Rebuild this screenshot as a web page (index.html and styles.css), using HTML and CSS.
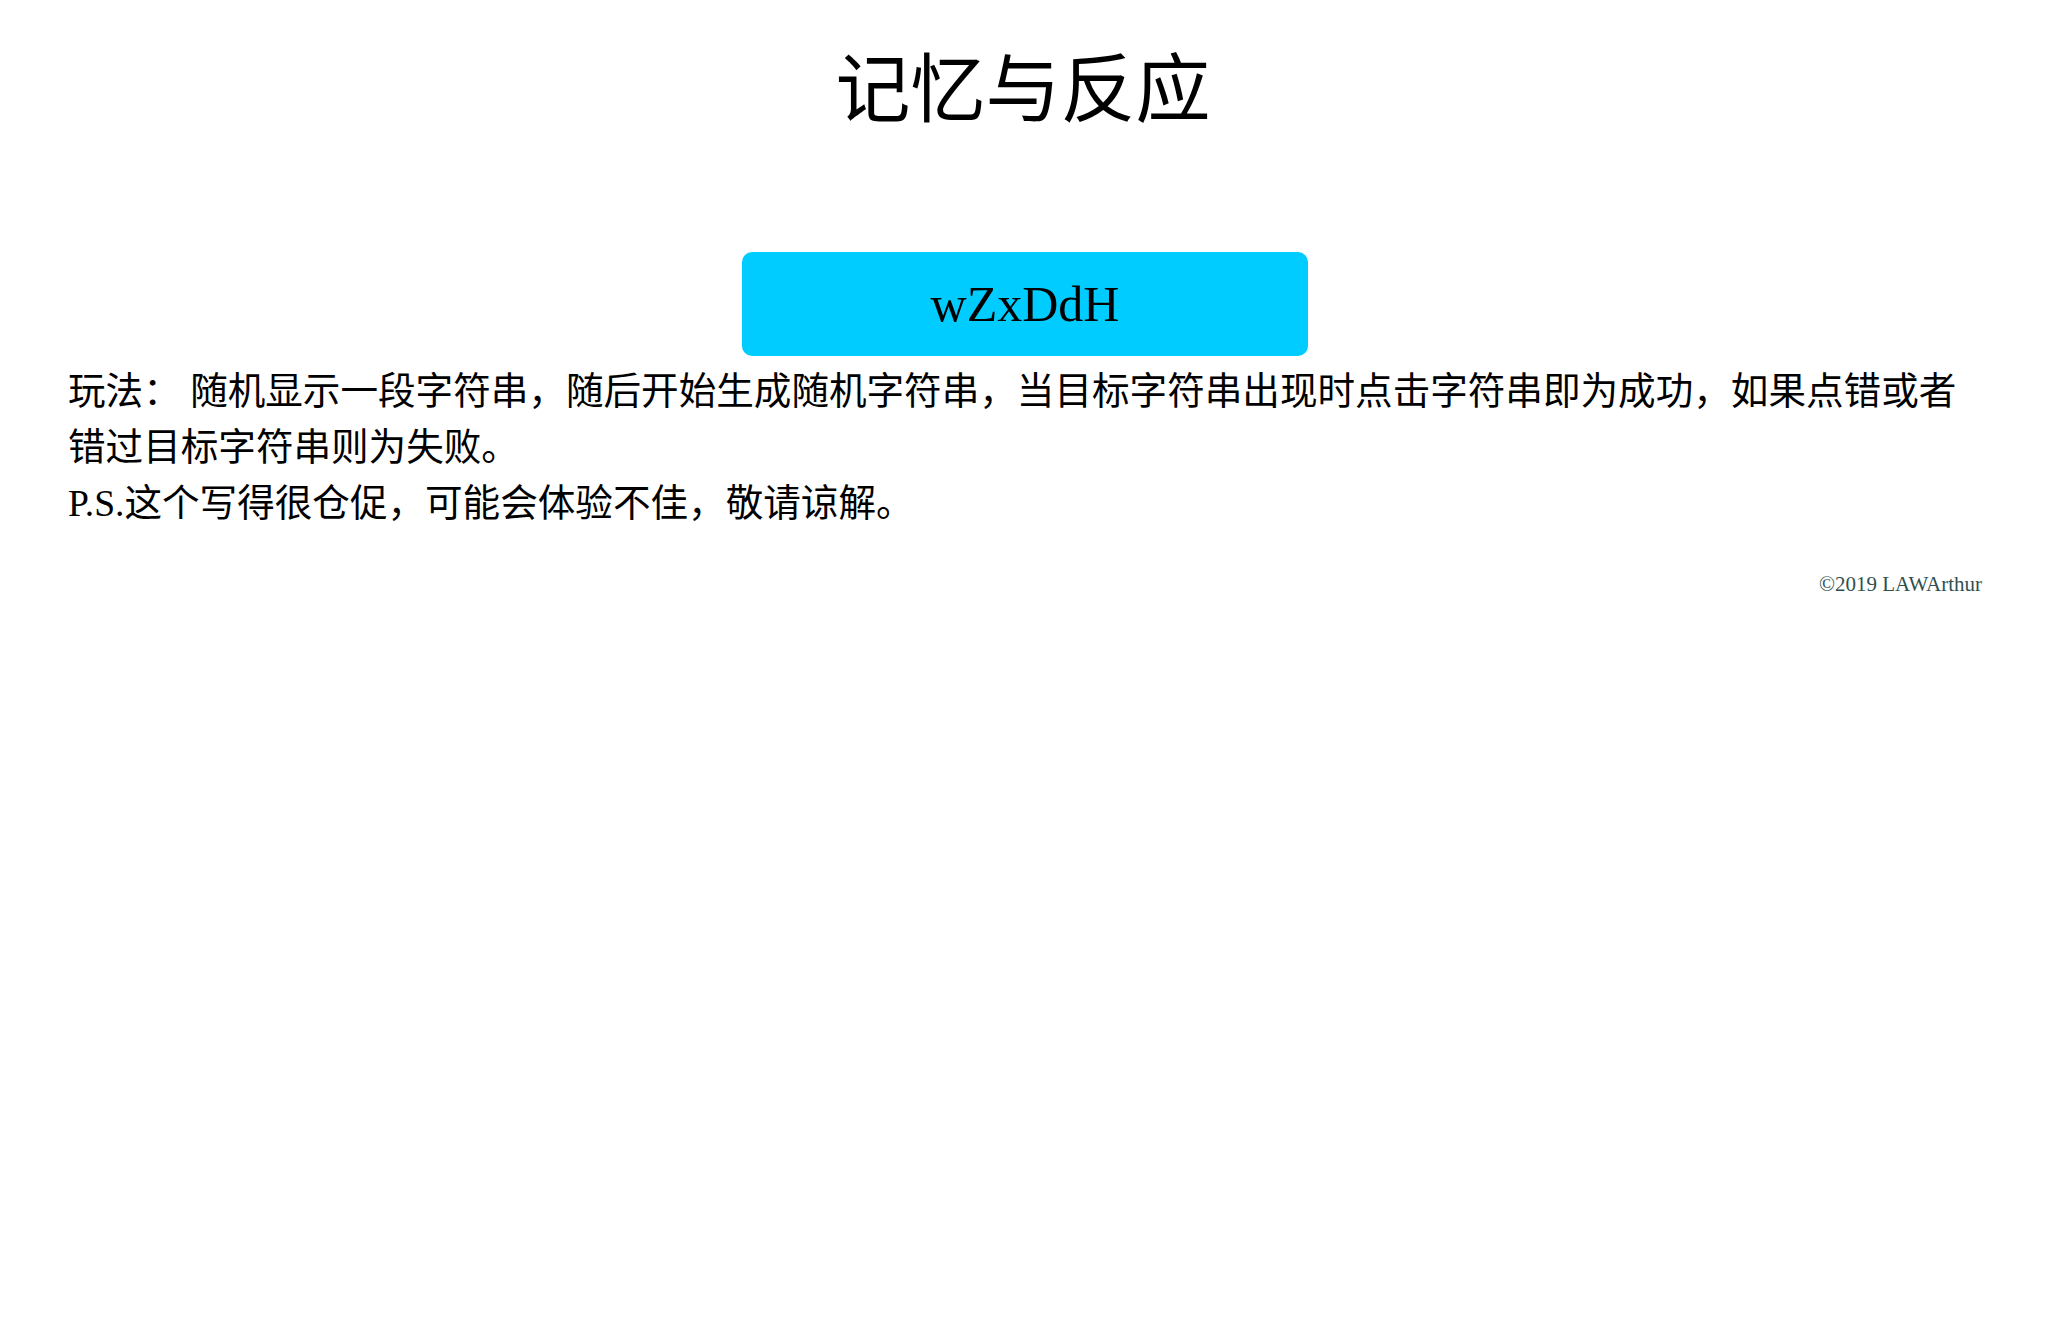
FILE: index.html
```html
<!DOCTYPE html>
<html lang="zh-CN">
<head>
<meta charset="utf-8">
<title>记忆与反应</title>
<link rel="stylesheet" href="styles.css">
</head>
<body>
<div class="page">
  <h1 class="title">记忆与反应</h1>
  <div class="target">wZxDdH</div>
  <div class="rules">
    <p class="rule">玩法： 随机显示一段字符串，随后开始生成随机字符串，当目标字符串出现时点击字符串即为成功，如果点错或者错过目标字符串则为失败。</p>
    <p class="rule">P.S.这个写得很仓促，可能会体验不佳，敬请谅解。</p>
  </div>
  <footer class="copyright">©2019 LAWArthur</footer>
</div>
</body>
</html>
```
FILE: styles.css
```css
html, body {
  margin: 0;
  padding: 0;
  background: #ffffff;
}
body {
  font-family: "Liberation Serif", "Noto Sans CJK SC", serif;
  font-size: 37.6px;
  line-height: 1.5;
  color: #000000;
}
.page {
  padding: 35px 66px 0 68px;
  display: flex;
  flex-direction: column;
}
.title {
  margin: 0 4px 0 0;
  font-size: 75px;
  font-weight: normal;
  text-align: center;
  line-height: 1.5;
}
.target {
  align-self: center;
  margin-top: 104px;
  width: 566px;
  height: 104px;
  border-radius: 10px;
  background: #00ccff;
  display: flex;
  align-items: center;
  justify-content: center;
  font-size: 50px;
  line-height: 1;
}
.rules {
  margin-top: 8px;
}
.rule {
  margin: 0;
}
.copyright {
  margin-top: 36px;
  text-align: right;
  font-size: 21px;
  color: #2f4f4f;
}
```
